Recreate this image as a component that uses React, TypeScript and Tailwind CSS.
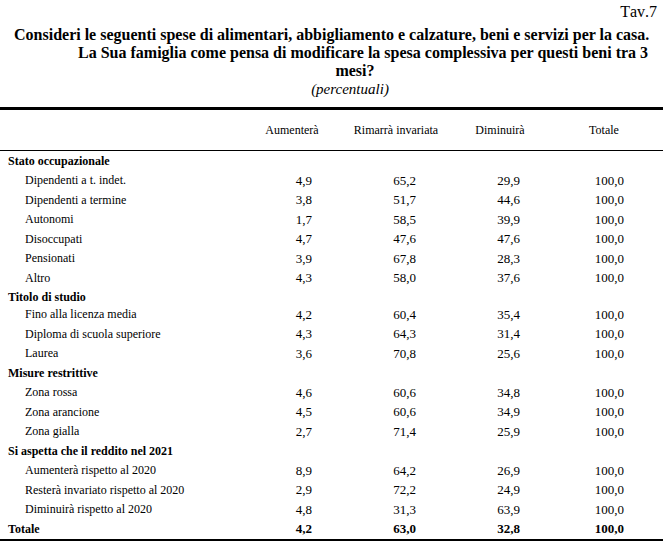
import React from "react";

type Row = { label: string; vals?: string[]; kind: "cat" | "item" | "total" };

const rows: Row[] = [
  { label: "Stato occupazionale", kind: "cat" },
  { label: "Dipendenti a t. indet.", vals: ["4,9", "65,2", "29,9", "100,0"], kind: "item" },
  { label: "Dipendenti a termine", vals: ["3,8", "51,7", "44,6", "100,0"], kind: "item" },
  { label: "Autonomi", vals: ["1,7", "58,5", "39,9", "100,0"], kind: "item" },
  { label: "Disoccupati", vals: ["4,7", "47,6", "47,6", "100,0"], kind: "item" },
  { label: "Pensionati", vals: ["3,9", "67,8", "28,3", "100,0"], kind: "item" },
  { label: "Altro", vals: ["4,3", "58,0", "37,6", "100,0"], kind: "item" },
  { label: "Titolo di studio", kind: "cat" },
  { label: "Fino alla licenza media", vals: ["4,2", "60,4", "35,4", "100,0"], kind: "item" },
  { label: "Diploma di scuola superiore", vals: ["4,3", "64,3", "31,4", "100,0"], kind: "item" },
  { label: "Laurea", vals: ["3,6", "70,8", "25,6", "100,0"], kind: "item" },
  { label: "Misure restrittive", kind: "cat" },
  { label: "Zona rossa", vals: ["4,6", "60,6", "34,8", "100,0"], kind: "item" },
  { label: "Zona arancione", vals: ["4,5", "60,6", "34,9", "100,0"], kind: "item" },
  { label: "Zona gialla", vals: ["2,7", "71,4", "25,9", "100,0"], kind: "item" },
  { label: "Si aspetta che il reddito nel 2021", kind: "cat" },
  { label: "Aumenterà rispetto al 2020", vals: ["8,9", "64,2", "26,9", "100,0"], kind: "item" },
  { label: "Resterà invariato rispetto al 2020", vals: ["2,9", "72,2", "24,9", "100,0"], kind: "item" },
  { label: "Diminuirà rispetto al 2020", vals: ["4,8", "31,3", "63,9", "100,0"], kind: "item" },
  { label: "Totale", vals: ["4,2", "63,0", "32,8", "100,0"], kind: "total" },
];

const headers = ["Aumenterà", "Rimarrà invariata", "Diminuirà", "Totale"];

const App = () => {
  return (
    <div className="w-[663px] h-[541px] bg-white text-black font-['Liberation_Serif',serif] overflow-hidden">
      {/* Title */}
      <div className="pt-[3px] pr-[6px] text-right text-[16px] leading-[18px] [font-kerning:none]">Tav.7</div>
      <div className="mt-[5px] font-bold text-[16px] leading-[18px]">
        <div className="pl-[14px] whitespace-nowrap">
          Consideri le seguenti spese di alimentari, abbigliamento e calzature, beni e servizi per la casa.
        </div>
        <div className="pl-[78px] whitespace-nowrap">
          La Sua famiglia come pensa di modificare la spesa complessiva per questi beni tra 3
        </div>
        <div className="text-center pl-[47px]">mesi?</div>
      </div>
      <div className="text-center pl-[37px] italic text-[15px] leading-[18px]">(percentuali)</div>

      {/* Table */}
      <div className="mt-[9px] border-t-[3px] border-black text-[12px]">
        <div className="grid grid-cols-[240px_104px_104px_104px_104px] h-[41px] items-center border-b border-black">
          <div />
          {headers.map((h) => (
            <div key={h} className="text-center">
              {h}
            </div>
          ))}
        </div>
        <div className="border-b-2 border-black">
          {rows.map((r) => (
            <div
              key={r.label}
              className={
                "grid grid-cols-[240px_104px_104px_104px_104px] items-center " +
                (r.label === "Titolo di studio" ? "h-[17px]" : "h-[19.5px]")
              }
            >
              <div className={r.kind === "item" ? "pl-[25px]" : "pl-[8px] font-bold"}>{r.label}</div>
              {(r.vals ?? ["", "", "", ""]).map((v, i) => (
                <div
                  key={i}
                  className={"text-right pr-[32px] text-[13px] " + (r.kind === "total" ? "font-bold" : "")}
                >
                  {v}
                </div>
              ))}
            </div>
          ))}
        </div>
      </div>
    </div>
  );
};

export default App;
